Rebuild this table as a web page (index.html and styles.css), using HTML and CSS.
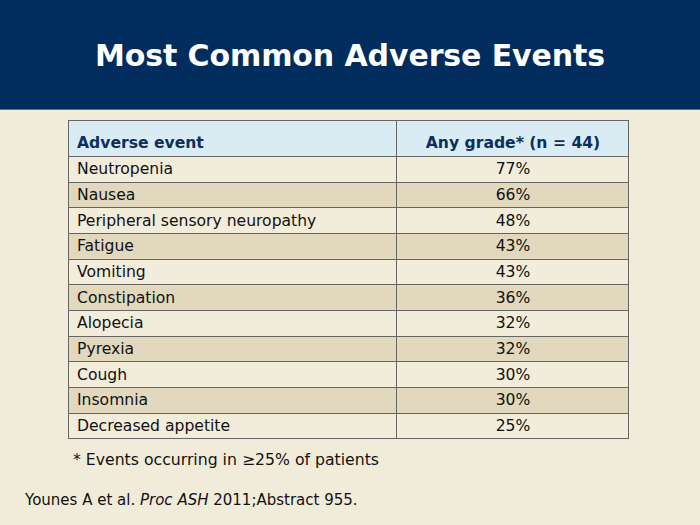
FILE: index.html
```html
<!DOCTYPE html>
<html>
<head>
<meta charset="utf-8">
<link rel="stylesheet" href="styles.css">
</head>
<body>
<div class="slide">
  <header class="banner"><h1>Most Common Adverse Events</h1></header>
  <main class="content">
    <table class="events">
      <thead>
        <tr><th class="name">Adverse event</th><th class="val">Any grade* (n = 44)</th></tr>
      </thead>
      <tbody>
        <tr><td>Neutropenia</td><td class="val">77%</td></tr>
        <tr><td>Nausea</td><td class="val">66%</td></tr>
        <tr><td>Peripheral sensory neuropathy</td><td class="val">48%</td></tr>
        <tr><td>Fatigue</td><td class="val">43%</td></tr>
        <tr><td>Vomiting</td><td class="val">43%</td></tr>
        <tr><td>Constipation</td><td class="val">36%</td></tr>
        <tr><td>Alopecia</td><td class="val">32%</td></tr>
        <tr><td>Pyrexia</td><td class="val">32%</td></tr>
        <tr><td>Cough</td><td class="val">30%</td></tr>
        <tr><td>Insomnia</td><td class="val">30%</td></tr>
        <tr><td>Decreased appetite</td><td class="val">25%</td></tr>
      </tbody>
    </table>
    <p class="note">* Events occurring in ≥25% of patients</p>
    <p class="cite">Younes A et al. <em>Proc ASH</em> 2011;Abstract 955.</p>
  </main>
</div>
</body>
</html>
```
FILE: styles.css
```css
html, body { margin: 0; padding: 0; }
body {
  width: 700px; height: 525px; overflow: hidden;
  background: #f1ebda;
  font-family: "DejaVu Sans", Verdana, sans-serif;
  color: #111;
}
.slide { width: 700px; height: 525px; display: flex; flex-direction: column; }
.banner {
  height: 110px;
  background: #002d5d;
  border-bottom: 1px solid #6a6f72;
  display: flex; align-items: center; justify-content: center;
  box-sizing: border-box;
}
.banner h1 {
  margin: 0; padding-top: 2px;
  color: #fff;
  font-family: "DejaVu Sans", sans-serif;
  font-weight: bold;
  font-size: 30px;
  letter-spacing: -0.1px;
}
.content { padding: 10px 0 0 0; }
.events {
  margin-left: 68px;
  width: 561px;
  border-collapse: collapse;
  border: 1px solid #555;
  font-size: 15.6px;
}
.events th, .events td {
  border: 1px solid #666;
  padding: 0 7px 0 8px;
  height: 24.66px;
  text-align: left;
}
.events th {
  background: #d9ebf3;
  color: #0c2f5c;
  font-weight: bold;
  height: 36px;
  vertical-align: bottom;
  padding-bottom: 4px;
  box-sizing: border-box;
}
.events th.name { width: 328px; }
.events .val { text-align: center; }
.events tbody tr:nth-child(odd) td { background: #f2ecdb; }
.events tbody tr:nth-child(even) td { background: #e1d8bd; }
.note { margin: 11px 0 0 73px; font-size: 15.7px; }
.cite { margin: 22px 0 0 25px; font-size: 15px; }
.cite em { font-style: italic; }
```
